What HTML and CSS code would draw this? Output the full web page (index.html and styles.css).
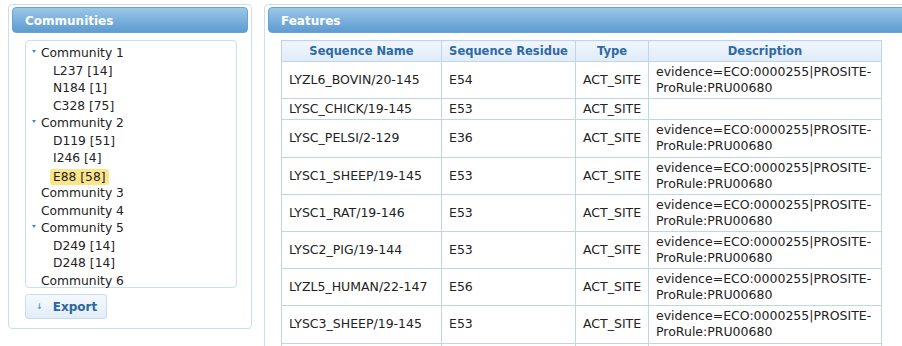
FILE: index.html
```html
<!DOCTYPE html>
<html lang="en">
<head>
  <meta charset="UTF-8">
  <link rel="stylesheet" href="styles.css">
  <title>Communities and Features</title>
</head>
<body>
  <div class="page">
    <div class="panel communities">
      <div class="panel-header">Communities</div>
      <div class="tree">
        <ul>
          <li class="open"><span class="node">Community 1</span>
            <ul>
              <li><span class="node">L237 [14]</span></li>
              <li><span class="node">N184 [1]</span></li>
              <li><span class="node">C328 [75]</span></li>
            </ul>
          </li>
          <li class="open"><span class="node">Community 2</span>
            <ul>
              <li><span class="node">D119 [51]</span></li>
              <li><span class="node">I246 [4]</span></li>
              <li><span class="node selected">E88 [58]</span></li>
            </ul>
          </li>
          <li><span class="node">Community 3</span></li>
          <li><span class="node">Community 4</span></li>
          <li class="open"><span class="node">Community 5</span>
            <ul>
              <li><span class="node">D249 [14]</span></li>
              <li><span class="node">D248 [14]</span></li>
            </ul>
          </li>
          <li><span class="node">Community 6</span></li>
        </ul>
      </div>
      <button class="export" type="button"><span class="arrow">&#8595;</span>Export</button>
    </div>

    <div class="panel features">
      <div class="panel-header">Features</div>
      <table class="grid">
        <thead>
          <tr>
            <th class="c-name">Sequence Name</th>
            <th class="c-res">Sequence Residue</th>
            <th class="c-type">Type</th>
            <th class="c-desc">Description</th>
          </tr>
        </thead>
        <tbody>
          <tr><td>LYZL6_BOVIN/20-145</td><td>E54</td><td>ACT_SITE</td><td>evidence=ECO:0000255|PROSITE-<br>ProRule:PRU00680</td></tr>
          <tr><td>LYSC_CHICK/19-145</td><td>E53</td><td>ACT_SITE</td><td></td></tr>
          <tr><td>LYSC_PELSI/2-129</td><td>E36</td><td>ACT_SITE</td><td>evidence=ECO:0000255|PROSITE-<br>ProRule:PRU00680</td></tr>
          <tr><td>LYSC1_SHEEP/19-145</td><td>E53</td><td>ACT_SITE</td><td>evidence=ECO:0000255|PROSITE-<br>ProRule:PRU00680</td></tr>
          <tr><td>LYSC1_RAT/19-146</td><td>E53</td><td>ACT_SITE</td><td>evidence=ECO:0000255|PROSITE-<br>ProRule:PRU00680</td></tr>
          <tr><td>LYSC2_PIG/19-144</td><td>E53</td><td>ACT_SITE</td><td>evidence=ECO:0000255|PROSITE-<br>ProRule:PRU00680</td></tr>
          <tr><td>LYZL5_HUMAN/22-147</td><td>E56</td><td>ACT_SITE</td><td>evidence=ECO:0000255|PROSITE-<br>ProRule:PRU00680</td></tr>
          <tr><td>LYSC3_SHEEP/19-145</td><td>E53</td><td>ACT_SITE</td><td>evidence=ECO:0000255|PROSITE-<br>ProRule:PRU00680</td></tr>
          <tr><td>LYSC_HUMAN/19-148</td><td>E53</td><td>ACT_SITE</td><td>evidence=ECO:0000255|PROSITE-<br>ProRule:PRU00680</td></tr>
        </tbody>
      </table>
    </div>
  </div>
</body>
</html>
```

FILE: styles.css
```css
body {
    margin: 0;
    padding: 0;
    background: #fff;
    font-family: "DejaVu Sans", Verdana, sans-serif;
    font-size: 12px;
    color: #222;
    overflow: hidden;
  }

  .page {
    display: flex;
    align-items: flex-start;
    padding: 4px 0 0 8px;
    width: 960px;
  }

  .panel {
    box-sizing: border-box;
    border: 1px solid #c9dff1;
    border-radius: 4px;
    padding: 2px 3px 0 3px;
    background: #fff;
  }

  .communities {
    width: 244px;
    height: 325px;
  }

  .features {
    width: 660px;
    height: 400px;
    margin-left: 12px;
  }

  .panel-header {
    height: 24px;
    line-height: 26px;
    padding-left: 12px;
    border: 1px solid #6aa2d3;
    border-radius: 4px;
    background: linear-gradient(#9cc7e8, #7bb0dd 50%, #5f9cd0);
    color: #fff;
    font-weight: bold;
  }

  /* tree */
  .tree {
    box-sizing: border-box;
    width: 212px;
    height: 248px;
    margin: 7px 0 0 13px;
    padding-top: 4px;
    border: 1px solid #c9dff1;
    border-radius: 4px;
    font-size: 12.3px;
  }

  .tree ul {
    list-style: none;
    margin: 0;
    padding: 0;
  }

  .tree > ul > li {
    position: relative;
    padding-left: 15px;
  }

  .tree ul ul li {
    padding-left: 12px;
  }

  .node {
    display: inline-block;
    line-height: 17.5px;
  }

  .tree li.open::before {
    content: "";
    position: absolute;
    left: 6px;
    top: 5px;
    border-left: 2.5px solid transparent;
    border-right: 2.5px solid transparent;
    border-top: 3px solid #3b8ad6;
  }

  .node.selected {
    background: #fbe588;
    border-radius: 3px;
    margin-left: -3px;
    padding: 0 3px;
    line-height: 16px;
    margin-top: 1px;
    margin-bottom: 0.5px;
  }

  .export {
    display: flex;
    align-items: center;
    box-sizing: border-box;
    width: 82px;
    height: 25px;
    margin: 6px 0 0 13px;
    padding: 0 0 0 10px;
    border: 1px solid #c6dcf0;
    border-radius: 3px;
    background: linear-gradient(#f5f9fd, #e2edf8);
    font-family: "DejaVu Sans", Verdana, sans-serif;
    font-size: 12px;
    font-weight: bold;
    color: #2b679f;
  }

  .export .arrow {
    font-size: 8px;
    color: #5b8fc2;
    margin-right: 10px;
  }

  /* features table */
  .grid {
    border-collapse: collapse;
    table-layout: fixed;
    width: 601px;
    margin: 7px 0 0 13px;
    font-size: 12.5px;
  }

  .grid th,
  .grid td {
    border: 1px solid #bcd6ee;
    line-height: 16.1px;
    padding: 2px 7px 2px 7px;
    text-align: left;
    vertical-align: middle;
    white-space: nowrap;
    overflow: hidden;
  }

  .grid th {
    text-align: center;
    color: #2d6aa6;
    font-size: 11.5px;
    background: linear-gradient(#f0f6fd, #e0ecf8);
  }

  .c-name { width: 145px; }
  .c-res { width: 119px; }
  .c-type { width: 58px; }
  .c-desc { width: 218px; }
```
